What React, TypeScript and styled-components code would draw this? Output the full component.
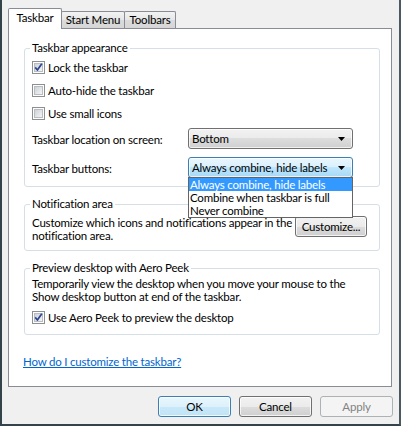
import React from 'react';
import styled, { createGlobalStyle, css } from 'styled-components';

const GlobalStyle = createGlobalStyle`
  html, body {
    margin: 0;
    padding: 0;
    background: #f0f0f0;
  }
  body {
    font-family: Lato, 'Segoe UI', sans-serif;
    font-size: 11.5px;
    letter-spacing: -0.2px;
    color: #000;
  }
`;

const Window = styled.div`
  box-sizing: border-box;
  width: 401px;
  height: 426px;
  background: #f0f0f0;
  border-left: 2px solid #34434a;
  border-right: 2px solid #4b5a61;
  border-bottom: 2px solid #34434a;
  padding: 8px 7px 0 6px;
  display: flex;
  flex-direction: column;
`;

const TabStrip = styled.div`
  display: flex;
  align-items: flex-end;
  height: 21px;
  margin-bottom: -1px;
  position: relative;
  z-index: 1;
`;

const Tab = styled.div<{ $active?: boolean; $width: number }>`
  box-sizing: border-box;
  width: ${p => p.$width}px;
  height: 17px;
  margin-bottom: 1px;
  margin-left: -1px;
  border: 1px solid #898c95;
  border-bottom: none;
  border-radius: 2px 2px 0 0;
  background: linear-gradient(#f3f3f3, #e6e6e6 50%, #dbdbdb 50%, #d6d6d6);
  display: flex;
  align-items: center;
  justify-content: center;
  line-height: 14px;
  white-space: nowrap;
  &:first-child {
    margin-left: 0;
  }
  ${p =>
    p.$active &&
    css`
      height: 21px;
      margin-bottom: 0;
      background: #fff;
      position: relative;
      z-index: 2;
      padding-bottom: 3px;
    `}
`;

const Panel = styled.div`
  box-sizing: border-box;
  height: 359px;
  background: #fff;
  border: 1px solid #898c95;
  padding: 11px 11px 0 15px;
  display: flex;
  flex-direction: column;
  position: relative;
`;

const Group = styled.fieldset<{ $gapTop?: number }>`
  margin: ${p => p.$gapTop ?? 0}px 0 0;
  padding: 0 12px 8px 7px;
  border: 1px solid #d5dfe5;
  border-radius: 3px;
  min-width: 0;
`;

const Legend = styled.legend`
  padding: 0 2px;
  margin-left: -2px;
  line-height: 16px;
`;

const CheckRow = styled.label<{ $height?: number }>`
  display: flex;
  align-items: center;
  gap: 3px;
  height: ${p => p.$height ?? 23}px;
  white-space: nowrap;
`;

const SelectRow = styled.div<{ $gapTop: number }>`
  display: grid;
  grid-template-columns: 156px 165px;
  align-items: center;
  margin-top: ${p => p.$gapTop}px;
  position: relative;
`;

const RowLabel = styled.span`
  padding-top: 2px;
  white-space: nowrap;
`;

const SelectBox = styled.div<{ $focused?: boolean }>`
  box-sizing: border-box;
  height: 21px;
  border: 1px solid #707070;
  border-radius: 3px;
  background: linear-gradient(#f2f2f2, #ebebeb 50%, #dddddd 50%, #cfcfcf);
  box-shadow: inset 0 0 0 1px rgba(255, 255, 255, 0.7);
  display: flex;
  align-items: center;
  justify-content: space-between;
  padding: 0 7px 0 3px;
  white-space: nowrap;
  ${p =>
    p.$focused &&
    css`
      border-color: #3c7fb1;
      background: linear-gradient(#eaf6fd, #d9f0fc 50%, #bee6fd 50%, #a7d9f5);
    `}
`;

const DropList = styled.ul`
  position: absolute;
  left: 156px;
  top: 20px;
  width: 165px;
  box-sizing: border-box;
  margin: 0;
  padding: 0;
  list-style: none;
  background: #fff;
  border: 1px solid #646464;
  z-index: 5;
`;

const DropItem = styled.li<{ $selected?: boolean }>`
  height: 13px;
  line-height: 13px;
  padding-left: 1px;
  white-space: nowrap;
  ${p =>
    p.$selected &&
    css`
      background: #3399ff;
      color: #fff;
    `}
`;

const NotifyBody = styled.div`
  display: flex;
  justify-content: space-between;
  align-items: flex-start;
  padding-top: 4px;
`;

const Para = styled.p`
  margin: 0;
  line-height: 13px;
  white-space: nowrap;
`;

const PeekBody = styled.div`
  padding-top: 1px;
  display: flex;
  flex-direction: column;
  gap: 6px;
`;

const HelpLink = styled.a`
  color: #0066cc;
  text-decoration: underline;
  margin: 19px 0 0 -1px;
  line-height: 16px;
  align-self: flex-start;
  cursor: pointer;
`;

const ButtonBar = styled.div`
  display: flex;
  justify-content: flex-end;
  gap: 8px;
  margin: 9px -1px 0 0;
`;

const Button = styled.button<{ $width?: number; $variant?: 'default' | 'normal' | 'disabled' }>`
  box-sizing: border-box;
  width: ${p => p.$width ?? 73}px;
  height: 21px;
  padding: 0;
  font: inherit;
  letter-spacing: inherit;
  color: #000;
  white-space: nowrap;
  border: 1px solid #707070;
  border-radius: 3px;
  background: linear-gradient(#f2f2f2, #ebebeb 50%, #dddddd 50%, #cfcfcf);
  box-shadow: inset 0 0 0 1px rgba(255, 255, 255, 0.75);
  flex-shrink: 0;
  ${p =>
    p.$variant === 'default' &&
    css`
      border-color: #3c7fb1;
      background: linear-gradient(#eaf6fd, #dcf1fb 50%, #c9e9f9 50%, #bfe3f6);
    `}
  ${p =>
    p.$variant === 'disabled' &&
    css`
      border-color: #adb2b5;
      background: #f4f4f4;
      color: #838383;
      box-shadow: none;
    `}
`;

const Arrow = () => (
  <svg width="7" height="4" viewBox="0 0 7 4">
    <polygon points="0,0 7,0 3.5,4" fill="#000" />
  </svg>
);

const CheckBox = ({ checked }: { checked?: boolean }) => (
  <svg width="13" height="13" viewBox="0 0 13 13" style={{ flexShrink: 0 }}>
    <defs>
      <linearGradient id="cbfill" x1="0" y1="0" x2="1" y2="1">
        <stop offset="0" stopColor="#cbcfd5" />
        <stop offset="1" stopColor="#f7f7f7" />
      </linearGradient>
    </defs>
    <rect x="0.5" y="0.5" width="12" height="12" fill="#fdfdfd" stroke="#8e8f8f" />
    <rect x="2.5" y="2.5" width="8" height="8" fill="url(#cbfill)" stroke="#b9bdc3" />
    {checked && (
      <path
        d="M3.2 6.4 L5.4 9 L9.8 2.8"
        fill="none"
        stroke="#2b4590"
        strokeWidth="1.7"
        strokeLinejoin="round"
      />
    )}
  </svg>
);

const App = () => {
  return (
    <>
      <GlobalStyle />
      <Window>
        <TabStrip>
          <Tab $active $width={54}>Taskbar</Tab>
          <Tab $width={64}>Start Menu</Tab>
          <Tab $width={52}>Toolbars</Tab>
        </TabStrip>
        <Panel>
          <Group>
            <Legend>Taskbar appearance</Legend>
            <CheckRow>
              <CheckBox checked />
              Lock the taskbar
            </CheckRow>
            <CheckRow>
              <CheckBox />
              Auto-hide the taskbar
            </CheckRow>
            <CheckRow>
              <CheckBox />
              Use small icons
            </CheckRow>
            <SelectRow $gapTop={3}>
              <RowLabel>Taskbar location on screen:</RowLabel>
              <SelectBox>
                <span>Bottom</span>
                <Arrow />
              </SelectBox>
            </SelectRow>
            <SelectRow $gapTop={8}>
              <RowLabel>Taskbar buttons:</RowLabel>
              <SelectBox $focused>
                <span>Always combine, hide labels</span>
                <Arrow />
              </SelectBox>
              <DropList>
                <DropItem $selected>Always combine, hide labels</DropItem>
                <DropItem>Combine when taskbar is full</DropItem>
                <DropItem>Never combine</DropItem>
              </DropList>
            </SelectRow>
          </Group>

          <Group $gapTop={9}>
            <Legend>Notification area</Legend>
            <NotifyBody>
              <Para>
                Customize which icons and notifications appear in the
                <br />
                notification area.
              </Para>
              <Button $width={72}>Customize...</Button>
            </NotifyBody>
          </Group>

          <Group $gapTop={9}>
            <Legend>Preview desktop with Aero Peek</Legend>
            <PeekBody>
              <Para>
                Temporarily view the desktop when you move your mouse to the
                <br />
                Show desktop button at end of the taskbar.
              </Para>
              <CheckRow $height={17}>
                <CheckBox checked />
                Use Aero Peek to preview the desktop
              </CheckRow>
            </PeekBody>
          </Group>

          <HelpLink>How do I customize the taskbar?</HelpLink>
        </Panel>
        <ButtonBar>
          <Button $variant="default">OK</Button>
          <Button>Cancel</Button>
          <Button $variant="disabled">Apply</Button>
        </ButtonBar>
      </Window>
    </>
  );
};

export default App;
